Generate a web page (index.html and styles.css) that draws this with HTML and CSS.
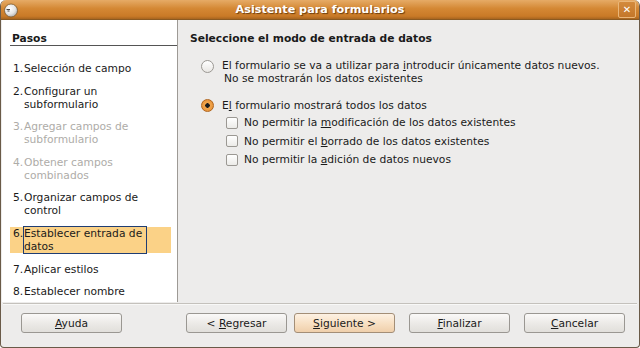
FILE: index.html
```html
<!DOCTYPE html>
<html lang="es">
<head>
    <meta charset="UTF-8">
    <meta name="viewport" content="width=device-width, initial-scale=1.0">
    <title>Asistente para formularios</title>
    <link rel="stylesheet" href="styles.css">
</head>
<body>
  <div class="window">
    <div class="titlebar">
        <svg class="app-icon" width="16" height="16" viewBox="0 0 16 16">
            <defs>
                <radialGradient id="ball" cx="0.4" cy="0.35" r="0.7">
                    <stop offset="0" stop-color="#ffffff"/>
                    <stop offset="0.6" stop-color="#e4e4e4"/>
                    <stop offset="1" stop-color="#a9a9a9"/>
                </radialGradient>
            </defs>
            <circle cx="8" cy="8.5" r="6.5" fill="url(#ball)" stroke="#7c5a30" stroke-width="0.8"/>
            <path d="M3.5 7.5 L7 7.5 M4.5 9 L6.5 9" stroke="#333" stroke-width="0.9"/>
        </svg>
        <span class="title">Asistente para formularios</span>
        <span class="close-btn">&#x2715;</span>
    </div>

    <div class="main">
        <div class="steps">
            <div class="steps-title">Pasos</div>
            <div class="step-list">
                <div class="step"><span class="num">1.</span><span>Selección de campo</span></div>
                <div class="step"><span class="num">2.</span><span>Configurar un<br>subformulario</span></div>
                <div class="step disabled"><span class="num">3.</span><span>Agregar campos de<br>subformulario</span></div>
                <div class="step disabled"><span class="num">4.</span><span>Obtener campos<br>combinados</span></div>
                <div class="step"><span class="num">5.</span><span>Organizar campos de<br>control</span></div>
                <div class="step active"><span class="num">6.</span><span class="focus">Establecer entrada de<br>datos</span></div>
                <div class="step"><span class="num">7.</span><span>Aplicar estilos</span></div>
                <div class="step"><span class="num">8.</span><span>Establecer nombre</span></div>
            </div>
        </div>

        <div class="content">
            <h2 class="content-title">Seleccione el modo de entrada de datos</h2>
            <div class="options">
                <div class="option">
                    <span class="radio"></span>
                    <span class="label">El formulario se va a utilizar para <u>i</u>ntroducir únicamente datos nuevos.<span class="second">No se mostrarán los datos existentes</span></span>
                </div>
                <div class="option option-checked">
                    <span class="radio checked"></span>
                    <span class="label">E<u>l</u> formulario mostrará todos los datos</span>
                </div>
                <div class="checks">
                    <div class="check-row"><span class="checkbox"></span><span>No permitir la <u>m</u>odificación de los datos existentes</span></div>
                    <div class="check-row"><span class="checkbox"></span><span>No permitir el <u>b</u>orrado de los datos existentes</span></div>
                    <div class="check-row"><span class="checkbox"></span><span>No permitir la <u>a</u>dición de datos nuevos</span></div>
                </div>
            </div>
        </div>
    </div>

    <div class="separator"></div>

    <div class="button-row">
        <button class="btn"><u>A</u>yuda</button>
        <button class="btn btn-back">&lt; <u>R</u>egresar</button>
        <button class="btn btn-default"><u>S</u>iguiente &gt;</button>
        <button class="btn btn-gap"><u>F</u>inalizar</button>
        <button class="btn btn-gap"><u>C</u>ancelar</button>
    </div>
  </div>
</body>
</html>
```

FILE: styles.css
```css
body {
    margin: 0;
    background-color: #ffffff;
    font-family: "DejaVu Sans", sans-serif;
    font-size: 10.7px;
    color: #1a1a1a;
}
.window {
    width: 640px;
    height: 348px;
    box-sizing: border-box;
    display: flex;
    flex-direction: column;
    background-color: #edeceb;
    border: 1px solid #6a5a48;
    border-top: none;
    border-radius: 6px 6px 4px 4px;
    overflow: hidden;
}
.titlebar {
    height: 20px;
    flex-shrink: 0;
    display: flex;
    align-items: center;
    justify-content: center;
    position: relative;
    background: linear-gradient(#e6ab66, #d48834 45%, #c97a27 85%, #a8651f);
    border-bottom: 1px solid #8a5a22;
    box-sizing: border-box;
}
.app-icon {
    position: absolute;
    left: 2px;
    top: 2px;
}
.title {
    color: #ffffff;
    font-weight: bold;
    font-size: 11.2px;
    text-shadow: 1px 1px 1px #6b3c0c;
}
.close-btn {
    position: absolute;
    right: 3px;
    top: 1px;
    width: 16px;
    height: 15px;
    border: 1px solid #eab678;
    border-radius: 2px;
    background: linear-gradient(#d38a3c, #c4772a);
    color: #ffffff;
    font-size: 10px;
    font-weight: bold;
    line-height: 15px;
    text-align: center;
}

.main {
    display: flex;
    height: 282px;
    flex-shrink: 0;
}
.steps {
    width: 176px;
    background-color: #ffffff;
    border-right: 1px solid #9d9a95;
    box-sizing: border-box;
    padding: 12px 0 0 8px;
    margin-left: 1px;
}
.steps-title {
    font-weight: bold;
    line-height: 13px;
    padding-left: 2px;
    padding-bottom: 0;
    border-bottom: 1px solid #555;
}
.step-list {
    display: flex;
    flex-direction: column;
    gap: 9.6px;
    margin-top: 16px;
    width: 161px;
}
.step {
    display: flex;
    line-height: 13px;
    padding-left: 3px;
}
.step .num {
    width: 11px;
    flex-shrink: 0;
}
.step.disabled {
    color: #aeaca8;
}
.step.active {
    background-color: #fbd287;
}
.focus {
    outline: 1px solid #1f3d73;
    outline-offset: 0;
    width: 122px;
}

.content {
    flex-grow: 1;
    padding: 12px 0 0 12px;
}
.content-title {
    margin: 0;
    font-size: 10.7px;
    font-weight: bold;
    line-height: 13px;
}
.options {
    margin-top: 15px;
    padding-left: 11px;
}
.option {
    display: flex;
    align-items: flex-start;
    line-height: 12.5px;
    margin-bottom: 14px;
}
.option-checked {
    margin-bottom: 4px;
    line-height: 13px;
}
.option .label {
    margin-left: 8px;
}
.second {
    display: block;
    padding-left: 2px;
}
.radio {
    width: 11px;
    height: 11px;
    margin-top: 0;
    flex-shrink: 0;
    border: 1px solid #9b9893;
    border-radius: 50%;
    background: linear-gradient(#ffffff, #e9e7e4);
    box-sizing: content-box;
}
.radio.checked {
    border-color: #b1651d;
    background: radial-gradient(circle, #1c1c1c 0 2px, #f3a74e 2.5px, #e08a30 100%);
}
.checks {
    padding-left: 25px;
    display: flex;
    flex-direction: column;
    gap: 5.5px;
}
.check-row {
    display: flex;
    align-items: center;
    line-height: 13px;
}
.checkbox {
    width: 10px;
    height: 10px;
    border: 1px solid #9b9893;
    border-radius: 2px;
    background: linear-gradient(#ffffff, #ecebe8);
    margin-right: 6px;
    flex-shrink: 0;
}

.separator {
    height: 1px;
    margin: 1px 2px 0 2px;
    background-color: #c4c1bc;
    border-bottom: 1px solid #f8f8f7;
}
.button-row {
    display: flex;
    padding: 8px 0 0 20px;
}
.btn {
    width: 101px;
    height: 20px;
    padding: 0;
    font-family: "DejaVu Sans", sans-serif;
    font-size: 10.7px;
    color: #1a1a1a;
    border: 1px solid #9a9792;
    border-radius: 3px;
    background: linear-gradient(#faf9f8, #ebe9e6 55%, #e1dfdb);
}
.btn-back {
    margin-left: 64px;
}
.btn-default {
    margin-left: 7px;
    background: linear-gradient(#fdf1e3, #f7dfc2 55%, #efcfab);
    border-color: #a38e77;
}
.btn-gap {
    margin-left: 14px;
}
```
